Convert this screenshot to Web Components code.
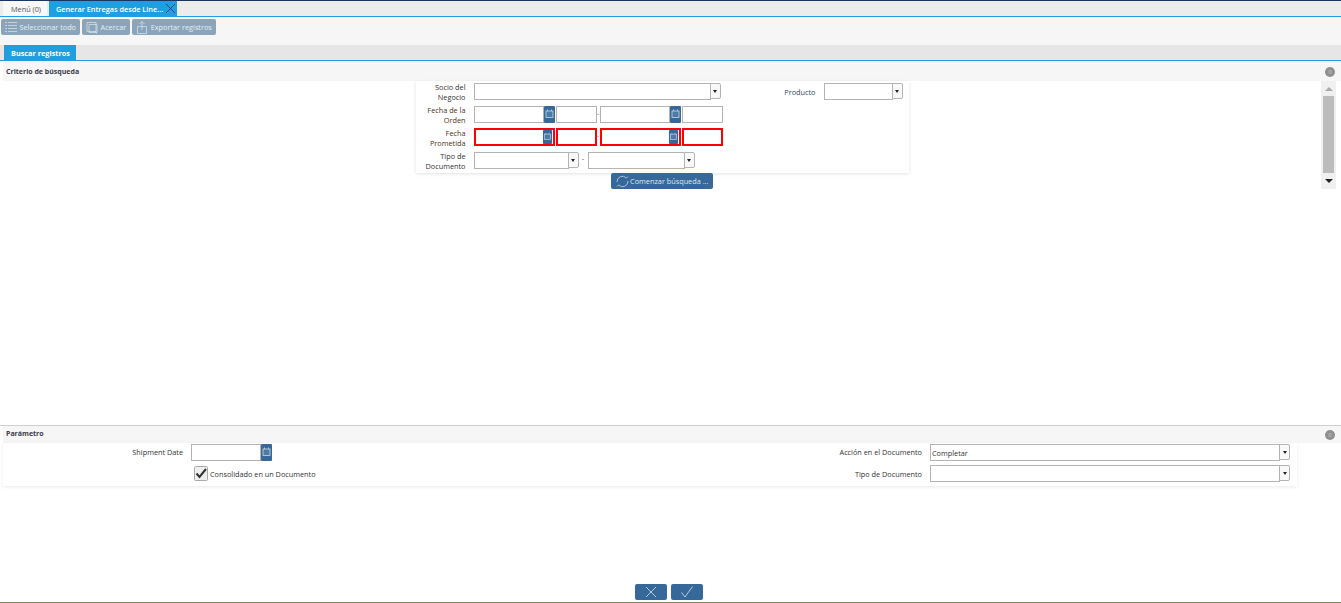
<!DOCTYPE html>
<html lang="es">
<head>
<meta charset="utf-8">
<title>Generar Entregas</title>
<style>
	html, body { margin: 0; height: 100%; background: #fff; overflow: hidden; }
	body { font: 7.3px "Open Sans", "Liberation Sans", sans-serif; color: #333; }
</style>
</head>
<body>
<app-window>
	<tab-bar slot="tabs" top>
		<tab-item>Menú (0)</tab-item>
		<tab-item active closable>Generar Entregas desde Line...</tab-item>
	</tab-bar>
	<tool-bar slot="tools">
		<tool-button icon="list">Seleccionar todo</tool-button>
		<tool-button icon="zoom">Acercar</tool-button>
		<tool-button icon="export">Exportar registros</tool-button>
	</tool-bar>
	<tab-bar slot="subtabs">
		<tab-item active bold>Buscar registros</tab-item>
	</tab-bar>

	<group-panel slot="search" title="Criterio de búsqueda" scroll>
		<search-form>
			<field-label>Socio del Negocio</field-label>
			<combo-box width="247"></combo-box>
			<field-label tone="blue">Producto</field-label>
			<combo-box width="79"></combo-box>

			<field-label tone="brown">Fecha de la Orden</field-label>
			<date-range></date-range>
			<span></span><span></span>

			<field-label tone="brown" low>Fecha Prometida</field-label>
			<date-range required></date-range>
			<span></span><span></span>

			<field-label>Tipo de Documento</field-label>
			<combo-range></combo-range>
			<span></span><span></span>
		</search-form>
		<action-button slot="after" icon="refresh">Comenzar búsqueda ...</action-button>
	</group-panel>

	<group-panel slot="params" title="Parámetro" ruled>
		<param-form>
			<field-label single>Shipment Date</field-label>
			<date-field width="81"></date-field>
			<field-label single>Acción en el Documento</field-label>
			<combo-box width="360" value="Completar"></combo-box>

			<span></span>
			<check-field checked>Consolidado en un Documento</check-field>
			<field-label single low>Tipo de Documento</field-label>
			<combo-box width="360"></combo-box>
		</param-form>
	</group-panel>

	<action-button slot="footer" icon="cancel" aria-label="Cancelar"></action-button>
	<action-button slot="footer" icon="ok" aria-label="Aceptar"></action-button>
</app-window>

<script>
// small helper, every element below gets its shadow root from here
function shadow(el, html) {
	el.attachShadow({ mode: 'open' });
	el.shadowRoot.innerHTML = html;
}

// page frame: tabs, toolbar, both panels and the footer buttons
class AppWindow extends HTMLElement {
	constructor() {
		super();
		shadow(this, `
		<style>
			:host { display: flex; flex-direction: column; height: 603px; box-sizing: border-box; border-top: 1px solid #17375e; }
			#tools { display: block; height: 28px; background: #f6f6f6; }
			#search { display: block; flex: 0 0 auto; margin-top: 1px; }
			#space { flex: 1; }
			#footer { display: flex; justify-content: center; gap: 4px; height: 18px; align-items: flex-start; padding-right: 3px; }
			#line { height: 1px; background: #7d8a58; }
		</style>
		<slot name="tabs"></slot>
		<div id="tools"><slot name="tools"></slot></div>
		<slot name="subtabs"></slot>
		<div id="search"><slot name="search"></slot></div>
		<div id="space"></div>
		<div><slot name="params"></slot></div>
		<div style="height:98px"></div>
		<div id="footer"><slot name="footer"></slot></div>
		<div id="line"></div>
		`);
	}
}

class TabBar extends HTMLElement {
	constructor() {
		super();
		shadow(this, `
		<style>
			:host { display: flex; gap: 2px; height: 15px; background: #e6e6e6; border-bottom: 1px solid #1f9ee2; padding-left: 4px; align-items: flex-end; }
			:host([top]) { background: #ececec; padding-left: 3px; }
		</style>
		<slot></slot>
		`);
	}
}

class TabItem extends HTMLElement {
	constructor() {
		super();
		const closable = this.hasAttribute('closable');
		shadow(this, `
		<style>
			:host { display: flex; align-items: center; height: 15px; padding: 0 6px 0 8px; background: #f8f8f8; color: #555; font-size: 7.3px; }
			:host([active]) { background: #1f9ee2; color: #fff; font-weight: 600; padding: 0 0 0 7px; }
			:host([bold]) { font-weight: 700; padding: 0 6px 0 7px; }
			span { display: inline-block; }
			svg { display: block; margin: 0 1px 0 2px; }
		</style>
		<span><slot></slot></span>
		${closable ? `<svg width="11" height="11" viewBox="0 0 11 11"><path d="M1 1 10 10M10 1 1 10" stroke="#17375e" stroke-width=".8" fill="none"/></svg>` : ''}
		`);
	}
}

class ToolBar extends HTMLElement {
	constructor() {
		super();
		shadow(this, `
		<style>
			:host { display: flex; gap: 2px; padding: 2px 0 0 1px; }
		</style>
		<slot></slot>
		`);
	}
}

// the icons of the toolbar, thin white strokes on the grey button
const TOOL_ICONS = {
	list: '<path d="M1 2.5h2M1 5.5h2M1 8.5h2M1 11.5h2M4 2.5h9M4 5.5h9M4 8.5h9M4 11.5h9"/>',
	zoom: '<path d="M2 2.5h9v9H2zM4 4.5h8v8H4zM9 11l3 2.5"/>',
	export: '<path d="M2.5 6.5h9v7h-9zM7 10V1.5M4.5 4 7 1.5 9.5 4"/>'
};

class ToolButton extends HTMLElement {
	constructor() {
		super();
		const icon = TOOL_ICONS[this.getAttribute('icon')];
		shadow(this, `
		<style>
			:host { display: flex; align-items: center; height: 16px; padding: 0 4px 0 3px; gap: 1.5px; background: #8aa5bb; border-radius: 2px; color: #e9eef2; font-size: 7.3px; }
			svg { display: block; fill: none; stroke: #d3dde5; stroke-width: .8; }
		</style>
		<svg width="14" height="14" viewBox="0 0 14 14">${icon}</svg>
		<slot></slot>
		`);
	}
}

// grey header with the counter badge, optional scrollbar at the right of the body
class GroupPanel extends HTMLElement {
	constructor() {
		super();
		const scroll = this.hasAttribute('scroll');
		shadow(this, `
		<style>
			:host { display: block; }
			:host([ruled]) { border-top: 1px solid #cfcfcf; }
			header { display: flex; align-items: center; justify-content: space-between; height: 19px; margin-left: 3px; padding: 0 6px 0 3px; background: #f6f6f6; font-weight: 700; color: #3c3c4a; font-size: 7px; }
			header span { padding-bottom: 1px; }
			:host([ruled]) header { height: 17px; }
			:host([ruled]) header span { padding-bottom: 3px; }
			i { display: block; width: 10px; height: 10px; border-radius: 50%; background: #8f8f8f; color: #ccc; font: 6px/10px "Open Sans", sans-serif; text-align: center; }
			#row { display: flex; }
			#main { flex: 1; margin-left: 3px; }
			#bar { flex: 0 0 15px; margin-right: 5px; background: #f0f0f0; height: 108px; display: flex; flex-direction: column; align-items: center; }
			#bar b { display: block; width: 11px; height: 77px; background: #bcbcbc; margin: 5px 0 6px; }
			#bar svg { display: block; }
		</style>
		<header><span>${this.getAttribute('title')}</span><i>0</i></header>
		<div id="row">
			<div id="main"><slot></slot><slot name="after"></slot></div>
			${scroll ? `<div id="bar">
				<svg style="margin-top:6px" width="8" height="4" viewBox="0 0 8 4"><path d="M4 0 8 4H0z" fill="#aaa"/></svg>
				<b></b>
				<svg width="8" height="4" viewBox="0 0 8 4"><path d="M0 0h8L4 4z" fill="#222"/></svg>
			</div>` : ''}
		</div>
		`);
	}
}

class SearchForm extends HTMLElement {
	constructor() {
		super();
		shadow(this, `
		<style>
			:host { display: grid; width: 493px; box-sizing: border-box; margin: 0 auto; padding: 2px 6px 0 0; height: 92px;
				grid-template-columns: 50px 249px 85px 79px; grid-template-rows: 23px 22px 24px 21px; column-gap: 8px;
				box-shadow: 0 2px 3px rgba(0,0,0,.06), 2px 0 3px rgba(0,0,0,.03), -2px 0 3px rgba(0,0,0,.03); }
		</style>
		<slot></slot>
		`);
	}
}

class ParamForm extends HTMLElement {
	constructor() {
		super();
		shadow(this, `
		<style>
			:host { display: grid; width: 1294px; box-sizing: border-box; padding-top: 1px; height: 43px;
				grid-template-columns: 180px 531px 192px 360px; grid-template-rows: 21px 21px; column-gap: 8px;
				box-shadow: 0 1px 3px rgba(0,0,0,.09); }
		</style>
		<slot></slot>
		`);
	}
}

class FieldLabel extends HTMLElement {
	constructor() {
		super();
		shadow(this, `
		<style>
			:host { display: block; text-align: right; font-size: 7.3px; line-height: 10px; color: #333; margin-top: -1px; }
			:host([low]) { margin-top: 0; }
			:host([tone=blue]) { color: #2f4a68; padding-top: 5px; }
			:host([tone=brown]) { color: #4d3320; }
			:host([single]) { padding-top: 4px; }
		</style>
		<slot></slot>
		`);
	}
}

// text box, shared look of combo and date inputs
const BOX = `
	.box { box-sizing: border-box; height: 17px; border: 1px solid #b4b4b4; background: #fff; font-size: 7.3px; line-height: 16px; padding-left: 1px; color: #333; }
	:host([required]) .box { border: 2px solid #f00; height: 18px; }
`;

const CALENDAR = `<svg width="11" height="17" viewBox="0 0 11 17"><rect width="11" height="17" rx="1" fill="#36699a"/><rect x="2" y="5" width="7" height="6.5" fill="#4c7ca5" stroke="#c9d8e5" stroke-width=".8"/><path d="M3.5 3.5V5M7.5 3.5V5" stroke="#c9d8e5" stroke-width=".8"/></svg>`;

class ComboBox extends HTMLElement {
	constructor() {
		super();
		const w = this.getAttribute('width') || 100;
		shadow(this, `
		<style>
			:host { display: flex; align-items: flex-start; width: ${w}px; }
			${BOX}
			.box { flex: 1; min-width: 0; }
			button { box-sizing: border-box; width: 11px; height: 16px; padding: 0; margin: 0 0 0 -1px; background: #f8f8f8; border: 1px solid #b4b4b4; border-radius: 0 2px 2px 0; display: flex; align-items: center; justify-content: center; }
			button::before { content: ""; border: 2.5px solid transparent; border-top: 3px solid #222; border-bottom: 0; }
		</style>
		<div class="box">${this.getAttribute('value') || ''}</div><button tabindex="-1"></button>
		`);
	}
}

class DateField extends HTMLElement {
	constructor() {
		super();
		const w = this.getAttribute('width') || 81;
		shadow(this, `
		<style>
			:host { display: flex; width: ${w}px; height: 17px; }
			${BOX}
			.box { flex: 1; }
			svg { display: block; flex: none; }
			:host([required]) .box { flex: none; width: 100%; }
			:host([required]) svg { margin: 2px 0 0 -13px; height: 14px; }
		</style>
		<div class="box"></div>${CALENDAR}
		`);
	}
}

// date + time, twice, with a dash between
class DateRange extends HTMLElement {
	constructor() {
		super();
		const req = this.hasAttribute('required') ? 'required' : '';
		shadow(this, `
		<style>
			:host { display: flex; align-items: flex-start; }
			${BOX}
			.box { width: 41px; margin-left: 1px; }
			span { width: 3px; text-align: center; line-height: 14px; color: #777; }
		</style>
		<date-field width="81" ${req}></date-field>
		<div class="box"></div>
		<span>-</span>
		<date-field width="81" ${req}></date-field>
		<div class="box"></div>
		`);
	}
}

class ComboRange extends HTMLElement {
	constructor() {
		super();
		shadow(this, `
		<style>
			:host { display: flex; align-items: flex-start; }
			span { width: 9px; text-align: center; line-height: 12px; color: #555; }
		</style>
		<combo-box width="105"></combo-box><span>-</span><combo-box width="107"></combo-box>
		`);
	}
}

class CheckField extends HTMLElement {
	constructor() {
		super();
		shadow(this, `
		<style>
			:host { display: flex; align-items: flex-start; gap: 2px; height: 17px; padding: 1px 0 0 3px; font-size: 7.3px; color: #333; }
			svg { display: block; }
			span { line-height: 17px; }
		</style>
		<svg width="14" height="15" viewBox="0 0 14 15"><rect x=".5" y=".5" width="13" height="14" rx="1" fill="#eee" stroke="#aaa"/><path d="M2.5 7.5 5.5 11 12 3" stroke="#333" stroke-width="2" fill="none"/></svg>
		<span><slot></slot></span>
		`);
	}
}

const ACTION_ICONS = {
	refresh: '<svg width="13" height="13" viewBox="0 0 13 13" fill="none" stroke="#a9c0d3" stroke-width="1"><path d="M1 7a5.5 5.5 0 0 1 9.5-4L12 1.5M12 6a5.5 5.5 0 0 1-9.5 4L1 11.5"/></svg>',
	cancel: '<svg width="12" height="12" viewBox="0 0 12 12" fill="none" stroke="#d5e2ec" stroke-width=".8"><path d="M1 1 11 11M11 1 1 11"/></svg>',
	ok: '<svg width="14" height="12" viewBox="0 0 14 12" fill="none" stroke="#d5e2ec" stroke-width=".8"><path d="M1.5 6.5 5 11 12.5 .5"/></svg>'
};

class ActionButton extends HTMLElement {
	constructor() {
		super();
		const icon = this.getAttribute('icon');
		const plain = icon == 'cancel' || icon == 'ok';
		shadow(this, `
		<style>
			:host { display: flex; align-items: center; justify-content: center; gap: 1.5px; box-sizing: border-box; background: #36699a; border-radius: 2px; color: #dfe8ef; font-size: 7.3px; height: 16px; }
			:host([slot=after]) { width: 102px; margin: 0 auto; padding-bottom: 1px; }
			:host([slot=after]) svg { margin-top: 1px; }
			:host([slot=footer]) { width: 32px; }
		</style>
		${ACTION_ICONS[icon]}${plain ? '' : '<slot></slot>'}
		`);
	}
}

// register everything, children first
customElements.define('tab-item', TabItem);
customElements.define('tab-bar', TabBar);
customElements.define('tool-button', ToolButton);
customElements.define('tool-bar', ToolBar);
customElements.define('field-label', FieldLabel);
customElements.define('combo-box', ComboBox);
customElements.define('date-field', DateField);
customElements.define('date-range', DateRange);
customElements.define('combo-range', ComboRange);
customElements.define('check-field', CheckField);
customElements.define('action-button', ActionButton);
customElements.define('search-form', SearchForm);
customElements.define('param-form', ParamForm);
customElements.define('group-panel', GroupPanel);
customElements.define('app-window', AppWindow);
</script>
</body>
</html>
